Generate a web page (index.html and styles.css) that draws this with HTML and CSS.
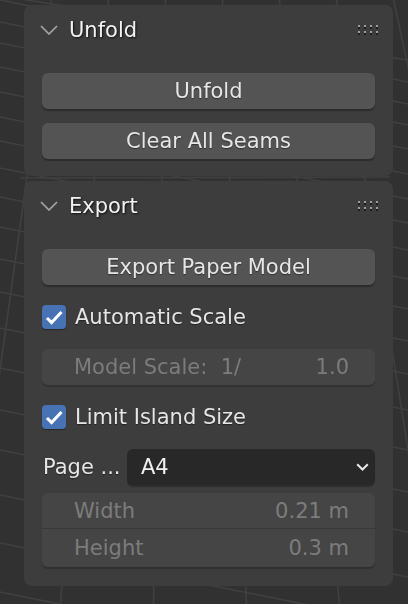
FILE: index.html
```html
<!DOCTYPE html>
<html>
<head>
<meta charset="utf-8">
<link rel="stylesheet" href="styles.css">
</head>
<body>
<svg class="grid" width="408" height="604" viewBox="0 0 408 604">
  <g stroke="#404040" stroke-width="1.6" fill="none">
    <line x1="51.5" y1="0" x2="-32.5" y2="604"/>
    <line x1="108.5" y1="0" x2="60.5" y2="604"/>
    <line x1="165.5" y1="0" x2="153.5" y2="604"/>
    <line x1="222.5" y1="0" x2="246.5" y2="604"/>
    <line x1="279.5" y1="0" x2="339.5" y2="604"/>
    <line x1="336.5" y1="0" x2="432.5" y2="604"/>
    <line x1="393.5" y1="0" x2="525.5" y2="604"/>
    <line x1="0" y1="22" x2="408" y2="104"/>
    <line x1="0" y1="43" x2="408" y2="125"/>
    <line x1="0" y1="67" x2="408" y2="149"/>
    <line x1="0" y1="92" x2="408" y2="174"/>
    <line x1="0" y1="117" x2="408" y2="199"/>
    <line x1="0" y1="141" x2="408" y2="223"/>
    <line x1="0" y1="168" x2="408" y2="250"/>
    <line x1="0" y1="197" x2="408" y2="279"/>
    <line x1="0" y1="227" x2="408" y2="309"/>
    <line x1="0" y1="259" x2="408" y2="341"/>
    <line x1="0" y1="292" x2="408" y2="374"/>
    <line x1="0" y1="328" x2="408" y2="410"/>
    <line x1="0" y1="368" x2="408" y2="450"/>
    <line x1="0" y1="410" x2="408" y2="492"/>
    <line x1="0" y1="450" x2="408" y2="532"/>
    <line x1="0" y1="495" x2="408" y2="577"/>
    <line x1="0" y1="543" x2="408" y2="625"/>
    <line x1="0" y1="592" x2="408" y2="674"/>
    <line x1="0" y1="0" x2="408" y2="82"/>
    <line x1="-100" y1="-20" x2="408" y2="60"/>
    <line x1="20" y1="178" x2="390" y2="177"/>
  </g>
</svg>

<main class="stack">
  <section class="panel">
    <header class="ph">
      <svg class="chev" width="18" height="10" viewBox="0 0 18 10"><path d="M1 1 L9 9 L17 1" fill="none" stroke="#a8a8a8" stroke-width="1.6"/></svg>
      <span class="title">Unfold</span>
      <svg class="grip" width="21" height="10" viewBox="0 0 21 10">
        <g fill="#1e1e1e"><rect x="0" y="2" width="2" height="2"/><rect x="6" y="2" width="2" height="2"/><rect x="12" y="2" width="2" height="2"/><rect x="18" y="2" width="2" height="2"/><rect x="0" y="8" width="2" height="2"/><rect x="6" y="8" width="2" height="2"/><rect x="12" y="8" width="2" height="2"/><rect x="18" y="8" width="2" height="2"/></g>
        <g fill="#9c9c9c"><rect x="0" y="0" width="2" height="2"/><rect x="6" y="0" width="2" height="2"/><rect x="12" y="0" width="2" height="2"/><rect x="18" y="0" width="2" height="2"/><rect x="0" y="6" width="2" height="2"/><rect x="6" y="6" width="2" height="2"/><rect x="12" y="6" width="2" height="2"/><rect x="18" y="6" width="2" height="2"/></g>
      </svg>
    </header>
    <div class="pc">
      <div class="btn">Unfold</div>
      <div class="btn">Clear All Seams</div>
    </div>
  </section>

  <section class="panel">
    <header class="ph">
      <svg class="chev" width="18" height="10" viewBox="0 0 18 10"><path d="M1 1 L9 9 L17 1" fill="none" stroke="#a8a8a8" stroke-width="1.6"/></svg>
      <span class="title">Export</span>
      <svg class="grip" width="21" height="10" viewBox="0 0 21 10">
        <g fill="#1e1e1e"><rect x="0" y="2" width="2" height="2"/><rect x="6" y="2" width="2" height="2"/><rect x="12" y="2" width="2" height="2"/><rect x="18" y="2" width="2" height="2"/><rect x="0" y="8" width="2" height="2"/><rect x="6" y="8" width="2" height="2"/><rect x="12" y="8" width="2" height="2"/><rect x="18" y="8" width="2" height="2"/></g>
        <g fill="#9c9c9c"><rect x="0" y="0" width="2" height="2"/><rect x="6" y="0" width="2" height="2"/><rect x="12" y="0" width="2" height="2"/><rect x="18" y="0" width="2" height="2"/><rect x="0" y="6" width="2" height="2"/><rect x="6" y="6" width="2" height="2"/><rect x="12" y="6" width="2" height="2"/><rect x="18" y="6" width="2" height="2"/></g>
      </svg>
    </header>
    <div class="pc pc-export">
      <div class="btn">Export Paper Model</div>
      <div class="check-row">
        <span class="cb"><svg width="24" height="24" viewBox="0 0 24 24"><path d="M5 13 L9.6 17.6 L19.5 7" fill="none" stroke="#fff" stroke-width="3"/></svg></span>
        <span class="lbl">Automatic Scale</span>
      </div>
      <div class="field">
        <span class="fl">Model Scale:  1/</span>
        <span class="fv">1.0</span>
      </div>
      <div class="check-row">
        <span class="cb"><svg width="24" height="24" viewBox="0 0 24 24"><path d="M5 13 L9.6 17.6 L19.5 7" fill="none" stroke="#fff" stroke-width="3"/></svg></span>
        <span class="lbl">Limit Island Size</span>
      </div>
      <div class="page-row">
        <span class="lbl page-lbl">Page ...</span>
        <div class="dropdown">
          <span>A4</span>
          <svg width="13" height="8" viewBox="0 0 13 8"><path d="M1.2 1.2 L6.5 6.5 L11.8 1.2" fill="none" stroke="#e8e8e8" stroke-width="2"/></svg>
        </div>
      </div>
      <div class="group">
        <div class="field gf gf-top"><span class="fl">Width</span><span class="fv">0.21 m</span></div>
        <div class="field gf gf-bot"><span class="fl">Height</span><span class="fv">0.3 m</span></div>
      </div>
    </div>
  </section>
</main>
</body>
</html>
```

FILE: styles.css
```css
html, body {
  margin: 0;
  padding: 0;
  background: #313131;
  width: 408px;
  height: 604px;
  overflow: hidden;
}

body {
  font-family: "DejaVu Sans", "Liberation Sans", sans-serif;
  font-size: 21px;
  color: #e6e6e6;
}

.grid {
  position: fixed;
  left: 0;
  top: 0;
  z-index: 0;
}

.stack {
  position: relative;
  z-index: 1;
  display: flex;
  flex-direction: column;
  gap: 5px;
  padding: 5px 0 0 24px;
  width: 369px;
}

.panel {
  background: #3d3d3d;
  border-radius: 8px;
}

.ph {
  height: 50px;
  display: flex;
  align-items: center;
  padding: 0 14px 0 16px;
}

.chev {
  flex: none;
  margin-right: 11px;
}

.title {
  flex: 1;
  color: #f2f2f2;
  text-shadow: 1px 1px 2px rgba(0, 0, 0, 0.75);
  line-height: 50px;
}

.grip {
  flex: none;
}

.pc {
  display: flex;
  flex-direction: column;
  gap: 14px;
  padding: 18px 18px 17px 18px;
}

.pc-export {
  padding-bottom: 19px;
}

.btn {
  height: 36px;
  line-height: 36px;
  text-align: center;
  background: #545454;
  border-radius: 6px;
  box-shadow: 0 2px 1px rgba(0, 0, 0, 0.28);
  text-shadow: 0 1px 1px rgba(0, 0, 0, 0.45);
}

.check-row {
  height: 36px;
  display: flex;
  align-items: center;
  gap: 9px;
}

.cb {
  width: 24px;
  height: 24px;
  border-radius: 4px;
  background: #4772b3;
  box-shadow: 0 1px 1px rgba(0, 0, 0, 0.35);
  display: flex;
}

.lbl {
  text-shadow: 0 1px 1px rgba(0, 0, 0, 0.45);
}

.field {
  height: 36px;
  display: flex;
  align-items: center;
  justify-content: space-between;
  padding: 0 26px 0 32px;
  background: #454545;
  border-radius: 6px;
  color: #7c7c7c;
  box-shadow: 0 2px 1px rgba(0, 0, 0, 0.18);
}

.fl {
  white-space: pre;
}

.page-row {
  height: 36px;
  display: flex;
  align-items: center;
}

.page-lbl {
  width: 84px;
  padding-left: 1px;
}

.dropdown {
  flex: 1;
  height: 36px;
  background: #282828;
  border-radius: 6px;
  display: flex;
  align-items: center;
  justify-content: space-between;
  padding: 0 6px 0 14px;
  box-shadow: 0 2px 1px rgba(0, 0, 0, 0.25);
  color: #f0f0f0;
}

.group {
  margin-top: -6px;
  display: flex;
  flex-direction: column;
  border-radius: 6px;
  box-shadow: 0 2px 1px rgba(0, 0, 0, 0.22);
}

.gf {
  box-shadow: none;
}

.gf-top {
  border-radius: 6px 6px 0 0;
  border-bottom: 1px solid #393939;
  height: 35px;
}

.gf-bot {
  border-radius: 0 0 6px 6px;
  height: 38px;
}
```
